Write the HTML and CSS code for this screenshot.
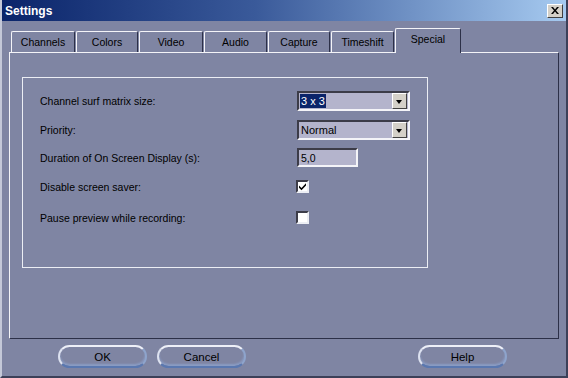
FILE: index.html
```html
<!DOCTYPE html>
<html>
    <head>
        <link rel="stylesheet" href="styles.css">
    </head>
    <body>
        <div class="window">
            <div class="titlebar">
                <span class="title">Settings</span>
                <span class="close-btn">
                    <svg width="8" height="7" viewBox="0 0 8 7"><path d="M0 0h2l2 2.5L6 0h2L5 3.5 8 7H6L4 4.5 2 7H0l3-3.5z" fill="#000"/></svg>
                </span>
            </div>

            <div class="content">
                <ul class="tabs">
                    <li class="tab" style="width:64px">Channels</li>
                    <li class="tab" style="width:62px">Colors</li>
                    <li class="tab" style="width:64px">Video</li>
                    <li class="tab" style="width:63px">Audio</li>
                    <li class="tab" style="width:62px">Capture</li>
                    <li class="tab" style="width:63px">Timeshift</li>
                    <li class="tab active" style="width:66px">Special</li>
                </ul>

                <div class="panel">
                    <div class="group">
                        <div class="row r1">
                            <label>Channel surf matrix size:</label>
                            <div class="combo">
                                <span class="value selected">3 x 3</span>
                                <span class="drop"></span>
                            </div>
                        </div>
                        <div class="row r2">
                            <label>Priority:</label>
                            <div class="combo">
                                <span class="value">Normal</span>
                                <span class="drop"></span>
                            </div>
                        </div>
                        <div class="row r3">
                            <label>Duration of On Screen Display (s):</label>
                            <div class="textbox">5,0</div>
                        </div>
                        <div class="row r4">
                            <label>Disable screen saver:</label>
                            <div class="checkbox">
                                <svg width="9" height="9" viewBox="0 0 9 9"><path d="M1 3.5l2.5 2.5L8 1.2v2.3L3.5 8.2 1 5.7z" fill="#000"/></svg>
                            </div>
                        </div>
                        <div class="row r5">
                            <label>Pause preview while recording:</label>
                            <div class="checkbox"></div>
                        </div>
                    </div>
                </div>

                <div class="buttons">
                    <button class="pill">OK</button>
                    <button class="pill">Cancel</button>
                    <button class="pill help">Help</button>
                </div>
            </div>
        </div>
    </body>
</html>
```

FILE: styles.css
```css
body {
    margin: 0;
    font-family: "Liberation Sans", Arial, sans-serif;
    font-size: 10.5px;
    color: #000;
    background: #7f85a3;
}
.window {
    width: 568px;
    height: 378px;
    box-sizing: border-box;
    background-color: #7f85a3;
    border-left: 2px solid #c4c8d8;
    border-right: 2px solid #3c4058;
    border-bottom: 2px solid #3c4058;
    display: flex;
    flex-direction: column;
}
.titlebar {
    height: 21px;
    display: flex;
    justify-content: space-between;
    align-items: center;
    padding: 0 3px 0 3px;
    background: linear-gradient(to right, #0a246a 0%, #3a5a9a 45%, #a6caf0 100%);
}
.title {
    color: #fff;
    font-weight: bold;
    font-size: 12px;
    font-family: "Liberation Sans", Arial, sans-serif;
}
.close-btn {
    width: 16px;
    height: 14px;
    box-sizing: border-box;
    background-color: #d4d0c8;
    border: 1px solid;
    border-color: #fff #404040 #404040 #fff;
    display: flex;
    justify-content: center;
    align-items: center;
}
.content {
    padding: 7px 7px 0 7px;
}
.tabs {
    list-style-type: none;
    margin: 0;
    padding: 0 0 0 2px;
    height: 24px;
    display: flex;
    align-items: flex-end;
    gap: 1px;
}
.tab {
    height: 21px;
    box-sizing: border-box;
    border: 1px solid;
    border-bottom: none;
    border-color: #f4f4f8 #2c3048 #2c3048 #f4f4f8;
    border-radius: 2px 2px 0 0;
    text-align: center;
    line-height: 20px;
}
.tab.active {
    height: 25px;
    margin-bottom: -1px;
    line-height: 21px;
    background-color: #7f85a3;
    position: relative;
    z-index: 1;
}
.panel {
    height: 287px;
    box-sizing: border-box;
    border: 1px solid;
    border-color: #f4f4f8 #2c3048 #2c3048 #f4f4f8;
    padding: 24px 0 0 12px;
}
.group {
    width: 406px;
    height: 191px;
    box-sizing: border-box;
    border: 1px solid #eceef4;
    padding: 8px 0 0 17px;
}
.row {
    display: flex;
    align-items: center;
}
.row label {
    width: 257px;
}
.r1 { height: 29px; }
.r2 { height: 29px; }
.r3 { height: 27px; }
.r4 { height: 31px; }
.r5 { height: 31px; }
.combo,
.textbox {
    height: 20px;
    box-sizing: border-box;
    background-color: #b4b4cc;
    border: 2px solid;
    border-color: #3c3c48 #f4f4f8 #f4f4f8 #3c3c48;
    display: flex;
    align-items: center;
    padding-left: 1px;
}
.combo {
    width: 113px;
    justify-content: space-between;
    padding-right: 1px;
}
.textbox {
    width: 61px;
    height: 19px;
    padding-left: 2px;
}
.value {
    font-size: 11px;
    padding: 1px 1px;
}
.value.selected {
    background-color: #0a246a;
    color: #fff;
}
.drop {
    width: 15px;
    height: 16px;
    box-sizing: border-box;
    background-color: #d4d0c8;
    border: 1px solid;
    border-color: #fff #404040 #404040 #fff;
    position: relative;
}
.drop::after {
    content: "";
    position: absolute;
    left: 3px;
    top: 6px;
    border-left: 3.5px solid transparent;
    border-right: 3.5px solid transparent;
    border-top: 4px solid #000;
}
.checkbox {
    width: 13px;
    height: 13px;
    box-sizing: border-box;
    margin-left: -1px;
    background-color: #fff;
    border: 2px solid;
    border-color: #3c3c48 #eceef4 #eceef4 #3c3c48;
    display: flex;
    justify-content: center;
    align-items: center;
}
.buttons {
    display: flex;
    padding: 6px 0 0 49px;
}
.pill {
    width: 89px;
    height: 23px;
    margin-right: 10px;
    font-family: "Liberation Sans", Arial, sans-serif;
    font-size: 11.5px;
    color: #000;
    background-color: #7f85a3;
    border: 2px solid;
    border-color: #eef0f8 #8ea4cc #5a78b0 #dde2f0;
    border-radius: 12px;
    box-shadow: inset 0 -2px 2px rgba(150, 180, 230, 0.5);
    padding: 0;
}
.pill.help {
    margin-left: 162px;
}
```
